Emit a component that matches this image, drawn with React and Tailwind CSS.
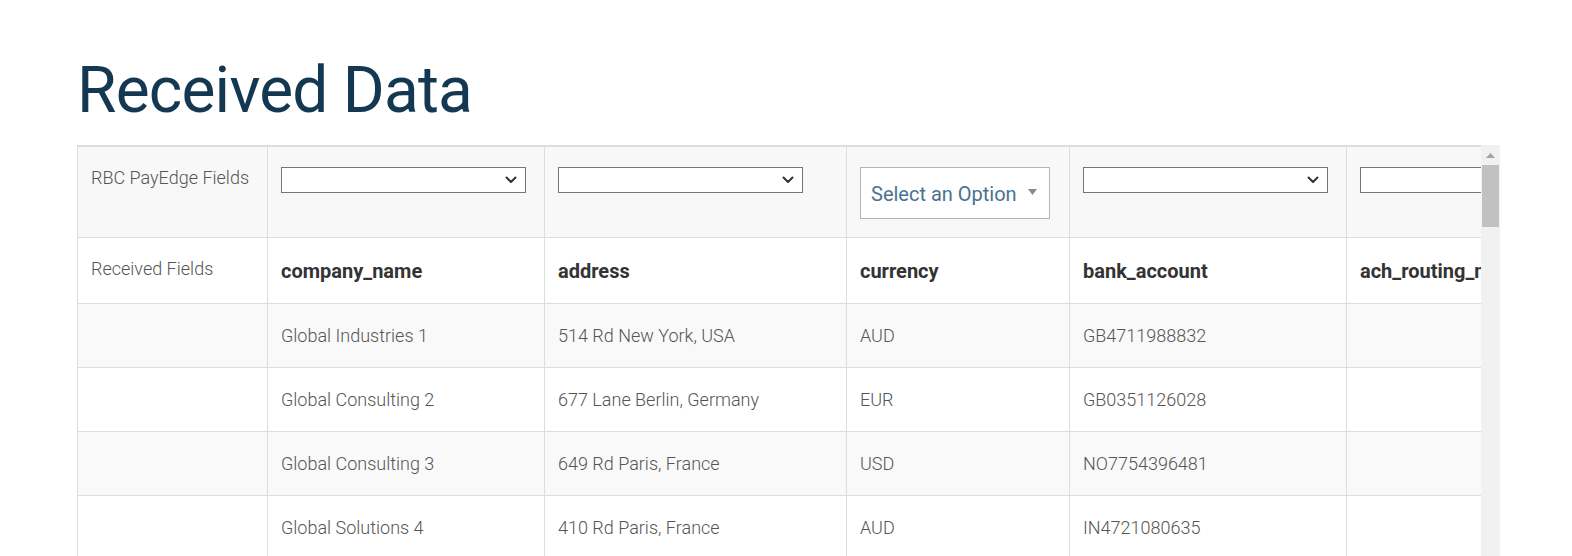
import React from "react";

const cols = [190, 277, 302, 223, 277, 277];

const rows = [
  ["Global Industries 1", "514 Rd New York, USA", "AUD", "GB4711988832", ""],
  ["Global Consulting 2", "677 Lane Berlin, Germany", "EUR", "GB0351126028", ""],
  ["Global Consulting 3", "649 Rd Paris, France", "USD", "NO7754396481", ""],
  ["Global Solutions 4", "410 Rd Paris, France", "AUD", "IN4721080635", ""],
];

function NativeSelect() {
  return (
    <div className="w-[245px] h-[26px] border border-[#767676] bg-white flex items-center justify-end pr-[8px]">
      <svg width="12" height="8" viewBox="0 0 12 8" fill="none">
        <path d="M1.5 1.5 L6 6 L10.5 1.5" stroke="#333" strokeWidth="2" strokeLinecap="round" strokeLinejoin="round" />
      </svg>
    </div>
  );
}

function FancySelect() {
  return (
    <div className="w-[190px] h-[52px] border border-[#b4b4b4] bg-white flex items-center pl-[10px] pr-[12px] justify-between">
      <span className="text-[20px] text-[#4a7290] font-normal mt-[1px]">Select an Option</span>
      <svg width="9" height="6" viewBox="0 0 9 6" className="-mt-[3px]">
        <path d="M0 0 L9 0 L4.5 6 Z" fill="#8a8a8a" />
      </svg>
    </div>
  );
}

export default function App() {
  const td = "border border-[#dddddd] px-[13px] align-top overflow-hidden whitespace-nowrap";
  return (
    <div className="bg-white w-[1572px] h-[556px] overflow-hidden" style={{ fontFamily: "Roboto, 'Noto Sans', sans-serif" }}>
      <div className="pl-[77px] pt-[59px]">
        <h1 className="text-[64px] leading-none font-normal text-[#143852] tracking-[-0.8px]">Received Data</h1>
        <div className="mt-[22px] flex w-[1423px]">
          <div className="w-[1404px] overflow-hidden border-t-2 border-[#dddddd]">
            <table className="table-fixed border-collapse -mt-px" style={{ width: cols.reduce((a, b) => a + b, 0) }}>
              <colgroup>
                {cols.map((w, i) => (
                  <col key={i} style={{ width: w }} />
                ))}
              </colgroup>
              <tbody>
                <tr className="bg-[#f8f8f8]">
                  <td className={`${td} pt-[19px] pb-[18px] text-[18px] leading-[24px] font-light text-[#555555]`}>RBC PayEdge Fields</td>
                  <td className={`${td} pt-[20px]`}><NativeSelect /></td>
                  <td className={`${td} pt-[20px]`}><NativeSelect /></td>
                  <td className={`${td} pt-[20px] pb-[18px]`}><FancySelect /></td>
                  <td className={`${td} pt-[20px]`}><NativeSelect /></td>
                  <td className={`${td} pt-[20px]`}><NativeSelect /></td>
                </tr>
                <tr className="bg-white">
                  <td className={`${td} pt-[19px] pb-[21px] text-[18px] leading-[24px] font-light text-[#555555]`}>Received Fields</td>
                  {["company_name", "address", "currency", "bank_account", "ach_routing_number"].map((h) => (
                    <td key={h} className={`${td} pt-[20px] pb-[19px] text-[20px] leading-[26px] font-bold text-[#333333]`}>{h}</td>
                  ))}
                </tr>
                {rows.map((r, i) => (
                  <tr key={i} className={i % 2 === 0 ? "bg-[#f9f9f9]" : "bg-white"}>
                    <td className={`${td} py-[20px] text-[18px] leading-[23px] font-light text-[#555555]`}>&nbsp;</td>
                    {r.map((c, j) => (
                      <td key={j} className={`${td} py-[20px] text-[18px] leading-[23px] font-light text-[#555555]`}>{c || "\u00a0"}</td>
                    ))}
                  </tr>
                ))}
              </tbody>
            </table>
          </div>
          <div className="w-[19px] bg-[#f1f1f1] flex flex-col items-center shrink-0">
            <div className="h-[20px] flex items-center justify-center">
              <svg width="9" height="5" viewBox="0 0 9 5">
                <path d="M0 5 L4.5 0 L9 5 Z" fill="#a3a3a3" />
              </svg>
            </div>
            <div className="w-[17px] h-[62px] bg-[#c1c1c1]" />
          </div>
        </div>
      </div>
    </div>
  );
}
